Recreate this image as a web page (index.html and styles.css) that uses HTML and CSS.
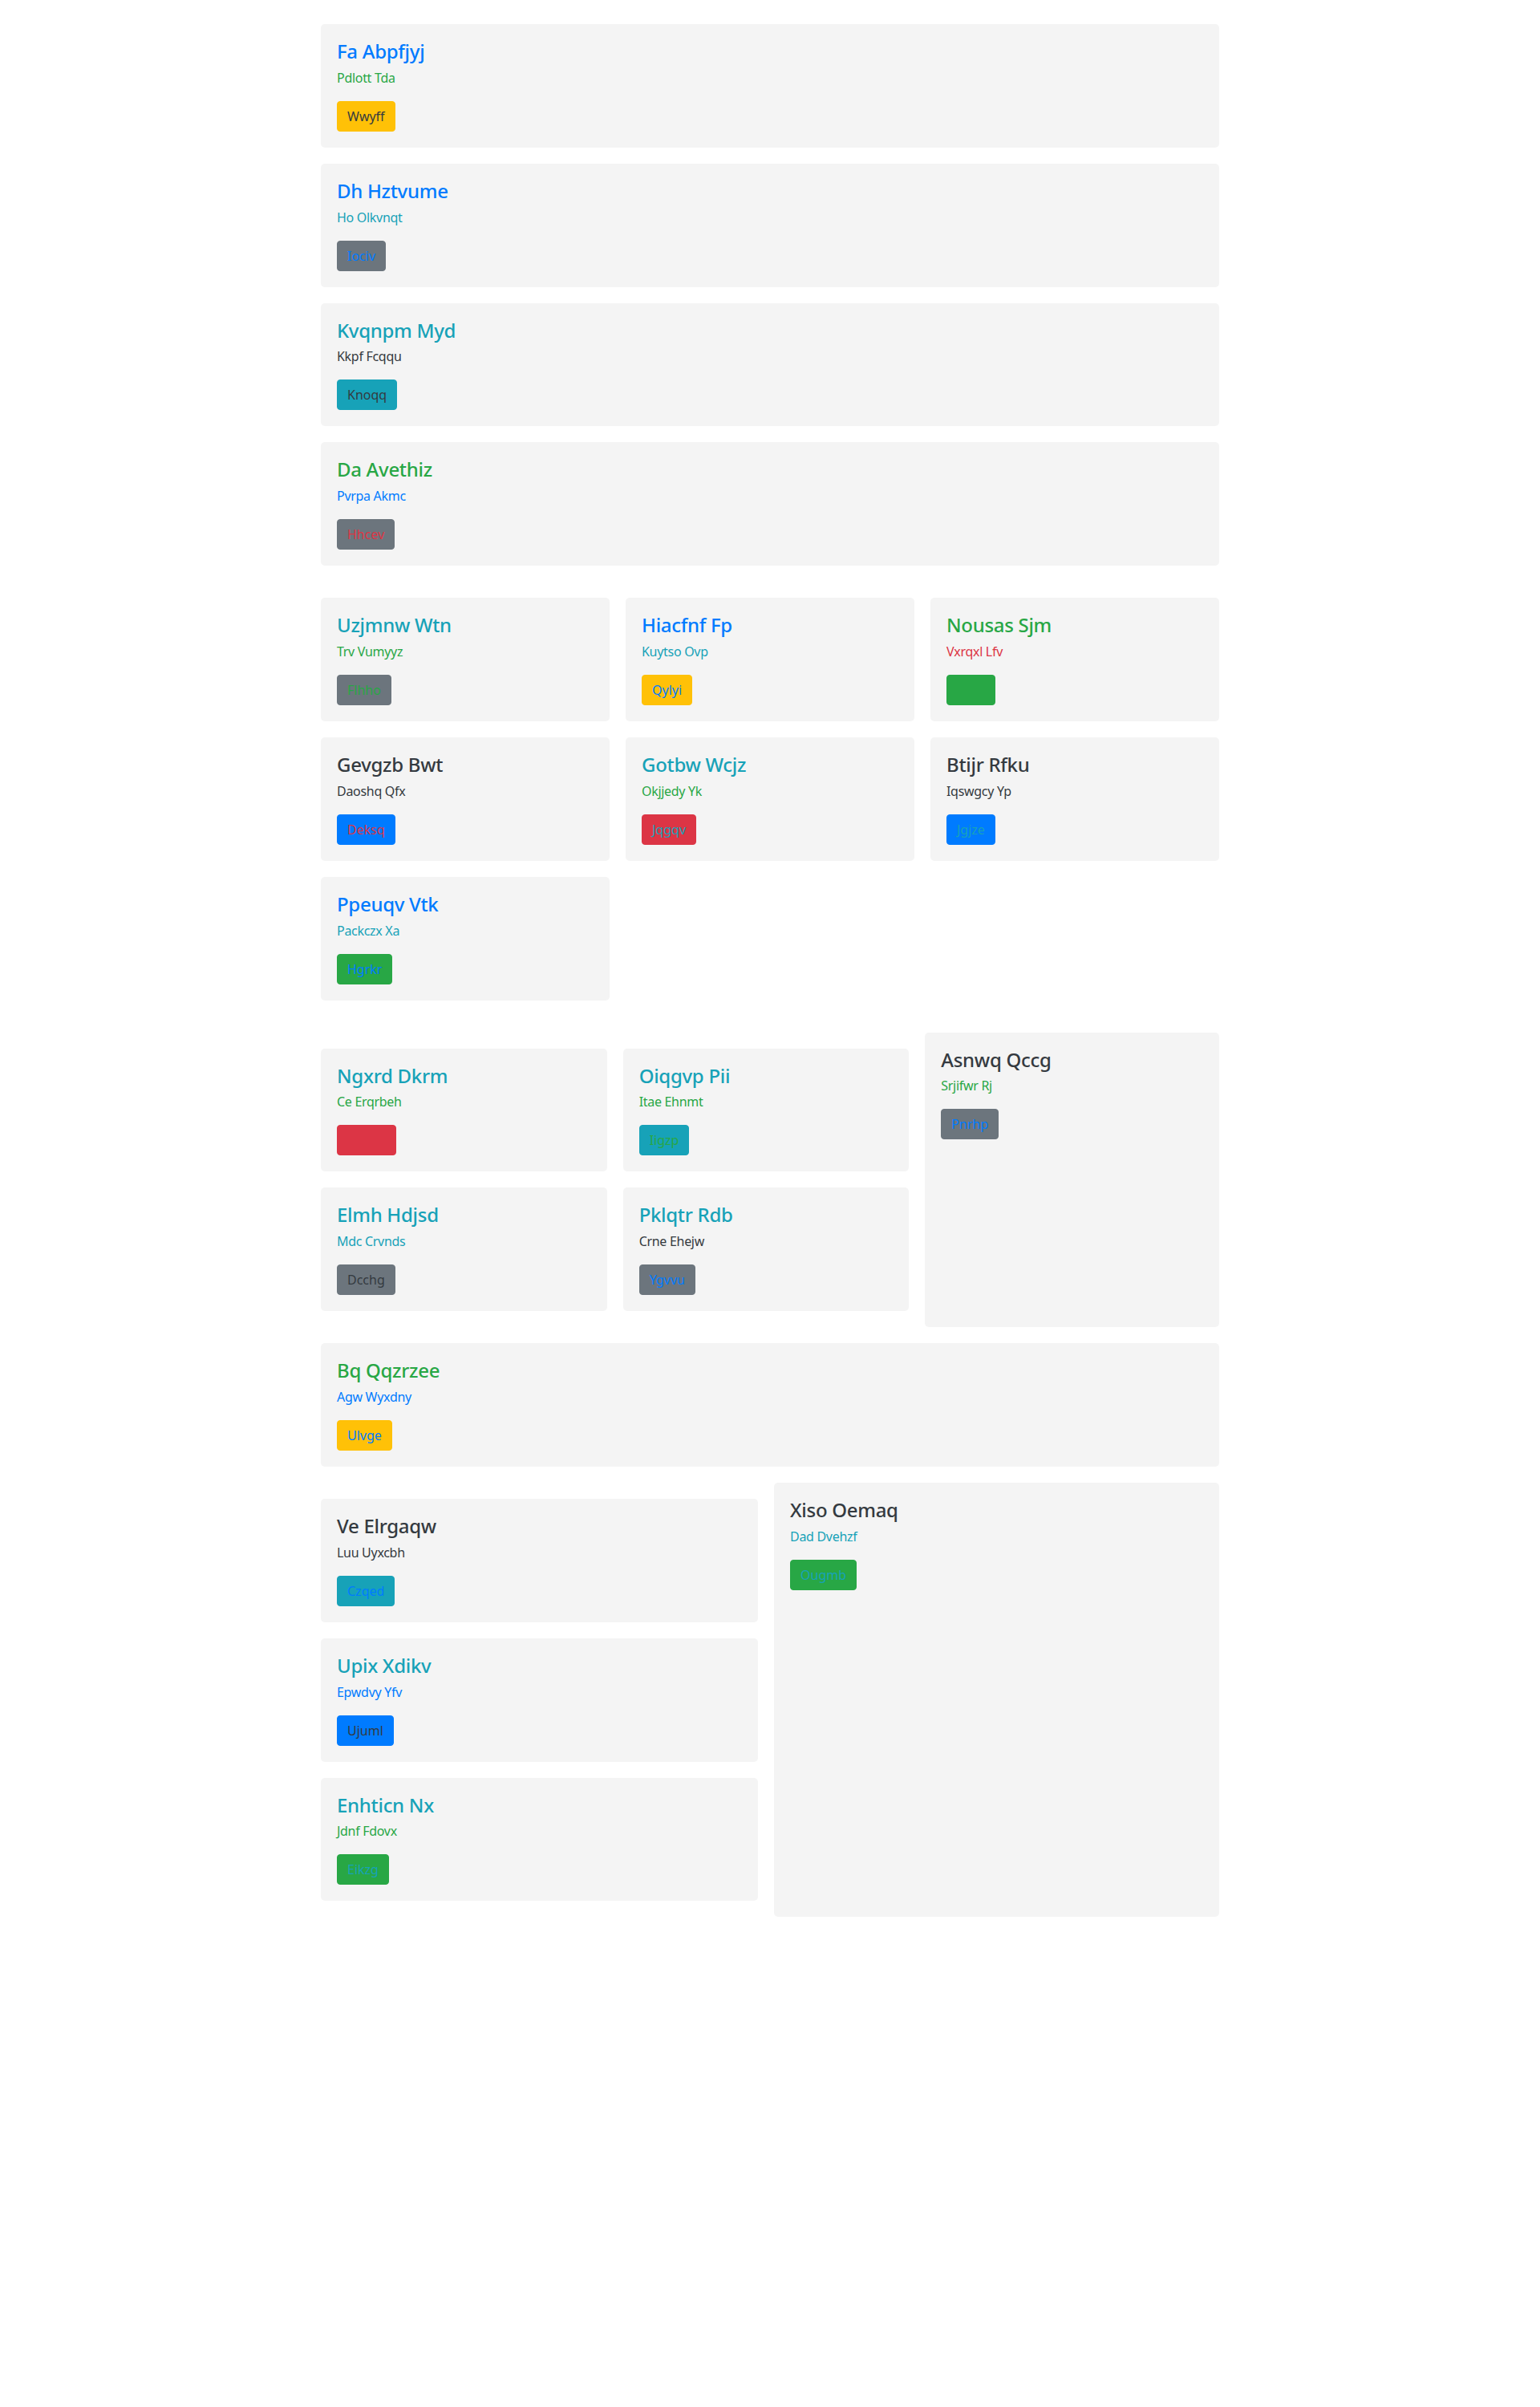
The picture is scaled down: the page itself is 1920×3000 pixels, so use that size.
FILE: index.html
```html
<!DOCTYPE html>
<html lang="en">
<head>
<meta charset="utf-8">
<title>Cards</title>
<link rel="stylesheet" href="styles.css">
</head>
<body>
<main class="page">

  <section class="stack">
    <div class="card">
      <h5 class="card-title t-primary">Fa Abpfjyj</h5>
      <p class="card-sub t-success">Pdlott Tda</p>
      <button class="btn bg-warning t-dark">Wwyff</button>
    </div>
    <div class="card">
      <h5 class="card-title t-primary">Dh Hztvume</h5>
      <p class="card-sub t-info">Ho Olkvnqt</p>
      <button class="btn bg-secondary t-primary">Iociv</button>
    </div>
    <div class="card">
      <h5 class="card-title t-info">Kvqnpm Myd</h5>
      <p class="card-sub t-dark">Kkpf Fcqqu</p>
      <button class="btn bg-info t-dark">Knoqq</button>
    </div>
    <div class="card">
      <h5 class="card-title t-success">Da Avethiz</h5>
      <p class="card-sub t-primary">Pvrpa Akmc</p>
      <button class="btn bg-secondary t-danger">Hhcev</button>
    </div>
  </section>

  <section class="grid3">
    <div class="card">
      <h5 class="card-title t-info">Uzjmnw Wtn</h5>
      <p class="card-sub t-success">Trv Vumyyz</p>
      <button class="btn bg-secondary t-success">Flhho</button>
    </div>
    <div class="card">
      <h5 class="card-title t-primary">Hiacfnf Fp</h5>
      <p class="card-sub t-info">Kuytso Ovp</p>
      <button class="btn bg-warning t-primary">Qylyi</button>
    </div>
    <div class="card">
      <h5 class="card-title t-success">Nousas Sjm</h5>
      <p class="card-sub t-danger">Vxrqxl Lfv</p>
      <button class="btn bg-success t-success">Ytnrj</button>
    </div>
    <div class="card">
      <h5 class="card-title t-dark">Gevgzb Bwt</h5>
      <p class="card-sub t-dark">Daoshq Qfx</p>
      <button class="btn bg-primary t-danger">Deksq</button>
    </div>
    <div class="card">
      <h5 class="card-title t-info">Gotbw Wcjz</h5>
      <p class="card-sub t-success">Okjjedy Yk</p>
      <button class="btn bg-danger t-info">Jqgqv</button>
    </div>
    <div class="card">
      <h5 class="card-title t-dark">Btijr Rfku</h5>
      <p class="card-sub t-dark">Iqswgcy Yp</p>
      <button class="btn bg-primary t-info">Jgjze</button>
    </div>
    <div class="card">
      <h5 class="card-title t-primary">Ppeuqv Vtk</h5>
      <p class="card-sub t-info">Packczx Xa</p>
      <button class="btn bg-success t-primary">Hgrkr</button>
    </div>
  </section>

  <section class="split split-a">
    <div class="col">
      <div class="grid2">
        <div class="card">
          <h5 class="card-title t-info">Ngxrd Dkrm</h5>
          <p class="card-sub t-success">Ce Erqrbeh</p>
          <button class="btn bg-danger t-danger">Qbkxe</button>
        </div>
        <div class="card">
          <h5 class="card-title t-info">Oiqgvp Pii</h5>
          <p class="card-sub t-success">Itae Ehnmt</p>
          <button class="btn bg-info t-success">Iigzp</button>
        </div>
        <div class="card">
          <h5 class="card-title t-info">Elmh Hdjsd</h5>
          <p class="card-sub t-info">Mdc Crvnds</p>
          <button class="btn bg-secondary t-dark">Dcchg</button>
        </div>
        <div class="card">
          <h5 class="card-title t-info">Pklqtr Rdb</h5>
          <p class="card-sub t-dark">Crne Ehejw</p>
          <button class="btn bg-secondary t-primary">Ygvvu</button>
        </div>
      </div>
    </div>
    <div class="card">
      <h5 class="card-title t-dark">Asnwq Qccg</h5>
      <p class="card-sub t-success">Srjifwr Rj</p>
      <button class="btn bg-secondary t-primary">Pnrhp</button>
    </div>
  </section>

  <div class="card">
    <h5 class="card-title t-success">Bq Qqzrzee</h5>
    <p class="card-sub t-primary">Agw Wyxdny</p>
    <button class="btn bg-warning t-primary">Ulvge</button>
  </div>

  <section class="split split-b">
    <div class="col col-stack">
      <div class="card">
        <h5 class="card-title t-dark">Ve Elrgaqw</h5>
        <p class="card-sub t-dark">Luu Uyxcbh</p>
        <button class="btn bg-info t-primary">Czqed</button>
      </div>
      <div class="card">
        <h5 class="card-title t-info">Upix Xdikv</h5>
        <p class="card-sub t-primary">Epwdvy Yfv</p>
        <button class="btn bg-primary t-dark">Ujuml</button>
      </div>
      <div class="card">
        <h5 class="card-title t-info">Enhticn Nx</h5>
        <p class="card-sub t-success">Jdnf Fdovx</p>
        <button class="btn bg-success t-info">Eikzg</button>
      </div>
    </div>
    <div class="card">
      <h5 class="card-title t-dark">Xiso Oemaq</h5>
      <p class="card-sub t-info">Dad Dvehzf</p>
      <button class="btn bg-success t-info">Ougmb</button>
    </div>
  </section>

</main>
</body>
</html>
```

FILE: styles.css
```css
* {
  box-sizing: border-box;
}

body {
  margin: 0;
  background: #ffffff;
  font-family: "Noto Sans", "Open Sans", "DejaVu Sans", sans-serif;
  color: #212529;
}

.page {
  width: 1120px;
  margin: 0 auto;
  padding-top: 30px;
  display: flex;
  flex-direction: column;
  gap: 20px;
}

.stack {
  display: flex;
  flex-direction: column;
  gap: 20px;
  padding-bottom: 20px;
}

.grid3 {
  display: grid;
  grid-template-columns: repeat(3, 1fr);
  gap: 20px;
  padding-bottom: 20px;
}

.split {
  display: grid;
  gap: 20px;
}

.split-a {
  grid-template-columns: 2fr 1fr;
}

.split-b {
  grid-template-columns: 545px 1fr;
}

.col {
  padding: 20px 0;
}

.col-stack {
  display: flex;
  flex-direction: column;
  gap: 20px;
}

.grid2 {
  display: grid;
  grid-template-columns: 1fr 1fr;
  gap: 20px;
}

.card {
  background: #f4f4f4;
  border-radius: 5px;
  padding: 20px;
  display: flex;
  flex-direction: column;
  align-items: flex-start;
}

.card-title {
  margin: 0 0 6px;
  font-size: 24px;
  line-height: 1.2;
  font-weight: 500;
  letter-spacing: -0.3px;
}

.card-sub {
  margin: 0 0 17px;
  font-size: 16px;
  line-height: 1.5;
  font-weight: 400;
  letter-spacing: -0.3px;
}

.btn {
  font-family: inherit;
  font-size: 16px;
  line-height: 24px;
  font-weight: 400;
  padding: 6px 12px;
  border: 1px solid transparent;
  border-radius: 4px;
  cursor: pointer;
}

.t-primary { color: #007bff; }
.t-success { color: #28a745; }
.t-info { color: #17a2b8; }
.t-danger { color: #dc3545; }
.t-dark { color: #343a40; }

.bg-primary { background: #007bff; border-color: #007bff; }
.bg-success { background: #28a745; border-color: #28a745; }
.bg-info { background: #17a2b8; border-color: #17a2b8; }
.bg-danger { background: #dc3545; border-color: #dc3545; }
.bg-warning { background: #ffc107; border-color: #ffc107; }
.bg-secondary { background: #6c757d; border-color: #6c757d; }
```
